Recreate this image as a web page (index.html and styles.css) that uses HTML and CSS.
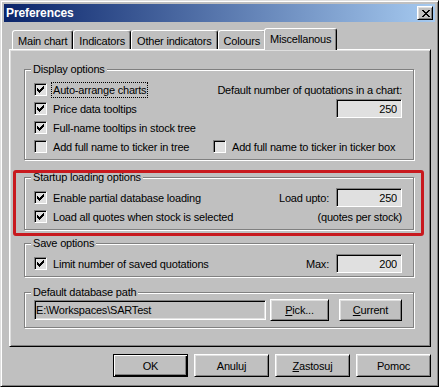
FILE: index.html
```html
<!DOCTYPE html>
<html lang="en">
<head>
  <meta charset="UTF-8">
  <meta name="viewport" content="width=device-width, initial-scale=1.0">
  <title>Preferences</title>
  <link rel="stylesheet" href="styles.css">
</head>
<body>
  <div class="window">
    <div class="titlebar">
      <span class="title">Preferences</span>
      <button class="close-btn" aria-label="Close">
        <svg width="8" height="7" viewBox="0 0 8 7" shape-rendering="crispEdges"><path d="M0 0h2v1h-2zM6 0h2v1h-2zM1 1h2v1h-2zM5 1h2v1h-2zM2 2h4v1h-4zM3 3h2v1h-2zM2 4h4v1h-4zM1 5h2v1h-2zM5 5h2v1h-2zM0 6h2v1h-2zM6 6h2v1h-2z"/></svg>
      </button>
    </div>

    <div class="client">
      <div class="tabs">
        <div class="tab">Main chart</div>
        <div class="tab">Indicators</div>
        <div class="tab">Other indicators</div>
        <div class="tab">Colours</div>
        <div class="tab active">Miscellanous</div>
      </div>

      <div class="panel">
        <fieldset class="group display">
          <legend>Display options</legend>
          <div class="grid">
            <label class="check">
              <span class="box"><svg width="7" height="7" viewBox="0 0 7 7" shape-rendering="crispEdges"><path d="M0 2H1V3H2V4H3V3H4V2H5V1H6V0H7V3H6V4H5V5H4V6H3V7H2V6H1V5H0Z"/></svg></span>
              <span class="text focus">Auto-arrange charts</span>
            </label>
            <span class="hint">Default number of quotations in a chart:</span>

            <label class="check">
              <span class="box"><svg width="7" height="7" viewBox="0 0 7 7" shape-rendering="crispEdges"><path d="M0 2H1V3H2V4H3V3H4V2H5V1H6V0H7V3H6V4H5V5H4V6H3V7H2V6H1V5H0Z"/></svg></span>
              <span class="text">Price data tooltips</span>
            </label>
            <input class="field number" type="text" value="250">

            <label class="check">
              <span class="box"><svg width="7" height="7" viewBox="0 0 7 7" shape-rendering="crispEdges"><path d="M0 2H1V3H2V4H3V3H4V2H5V1H6V0H7V3H6V4H5V5H4V6H3V7H2V6H1V5H0Z"/></svg></span>
              <span class="text">Full-name tooltips in stock tree</span>
            </label>
            <span></span>

            <label class="check">
              <span class="box"></span>
              <span class="text">Add full name to ticker in tree</span>
            </label>
            <label class="check">
              <span class="box"></span>
              <span class="text">Add full name to ticker in ticker box</span>
            </label>
          </div>
        </fieldset>

        <fieldset class="group startup">
          <legend>Startup loading options</legend>
          <div class="row">
            <label class="check">
              <span class="box"><svg width="7" height="7" viewBox="0 0 7 7" shape-rendering="crispEdges"><path d="M0 2H1V3H2V4H3V3H4V2H5V1H6V0H7V3H6V4H5V5H4V6H3V7H2V6H1V5H0Z"/></svg></span>
              <span class="text">Enable partial database loading</span>
            </label>
            <div class="inline">
              <span>Load upto:</span>
              <input class="field number" type="text" value="250">
            </div>
          </div>
          <div class="row">
            <label class="check">
              <span class="box"><svg width="7" height="7" viewBox="0 0 7 7" shape-rendering="crispEdges"><path d="M0 2H1V3H2V4H3V3H4V2H5V1H6V0H7V3H6V4H5V5H4V6H3V7H2V6H1V5H0Z"/></svg></span>
              <span class="text">Load all quotes when stock is selected</span>
            </label>
            <span>(quotes per stock)</span>
          </div>
        </fieldset>

        <fieldset class="group save">
          <legend>Save options</legend>
          <div class="row">
            <label class="check">
              <span class="box"><svg width="7" height="7" viewBox="0 0 7 7" shape-rendering="crispEdges"><path d="M0 2H1V3H2V4H3V3H4V2H5V1H6V0H7V3H6V4H5V5H4V6H3V7H2V6H1V5H0Z"/></svg></span>
              <span class="text">Limit number of saved quotations</span>
            </label>
            <div class="inline">
              <span>Max:</span>
              <input class="field number" type="text" value="200">
            </div>
          </div>
        </fieldset>

        <fieldset class="group path">
          <legend>Default database path</legend>
          <div class="path-row">
            <input class="field path-field" type="text" value="E:\Workspaces\SARTest">
            <button class="btn pick"><u>P</u>ick...</button>
            <button class="btn current"><u>C</u>urrent</button>
          </div>
        </fieldset>

        <div class="highlight"></div>
      </div>

      <div class="actions">
        <button class="btn default">OK</button>
        <button class="btn">Anuluj</button>
        <button class="btn"><u>Z</u>astosuj</button>
        <button class="btn">Pomoc</button>
      </div>
    </div>
  </div>
</body>
</html>
```

FILE: styles.css
```css
body {
  margin: 0;
  background-color: #c0c0c0;
  color: #000;
  font-family: "Liberation Sans", Arial, sans-serif;
  font-size: 11px;
  letter-spacing: -0.2px;
}

.window {
  box-sizing: border-box;
  width: 439px;
  height: 387px;
  padding: 3px;
  border: 1px solid;
  border-color: #dfdfdf #000 #000 #dfdfdf;
  box-shadow: inset 1px 1px #fff, inset -1px -1px #808080;
  display: flex;
  flex-direction: column;
}

.titlebar {
  height: 18px;
  flex: none;
  padding: 0 2px;
  display: flex;
  align-items: center;
  justify-content: space-between;
  background: linear-gradient(to right, #0a246a, #a6caf0);
}
.title {
  color: #fff;
  font-weight: bold;
  font-size: 12px;
  letter-spacing: -0.1px;
}
.close-btn {
  box-sizing: border-box;
  width: 16px;
  height: 14px;
  padding: 0 0 0 1px;
  border: 1px solid;
  border-color: #fff #000 #000 #fff;
  box-shadow: inset 1px 1px #dfdfdf, inset -1px -1px #808080;
  background-color: #c0c0c0;
  display: flex;
  align-items: center;
  justify-content: center;
}
.close-btn svg {
  display: block;
}

.client {
  flex: 1;
  padding: 6px 4px 0 5px;
  display: flex;
  flex-direction: column;
}

/* tab strip */
.tabs {
  height: 21px;
  padding-left: 3px;
  display: flex;
  align-items: flex-end;
}
.tab {
  box-sizing: border-box;
  height: 19px;
  padding: 2px 5px 0;
  line-height: 17px;
  border: 1px solid;
  border-bottom: none;
  border-color: #fff #000 transparent #fff;
  border-radius: 3px 3px 0 0;
  box-shadow: inset -1px 0 #808080;
  background-color: #c0c0c0;
  white-space: nowrap;
}
.tab.active {
  height: 22px;
  margin: 0 -2px -1px;
  position: relative;
  z-index: 1;
}

.panel {
  box-sizing: border-box;
  height: 298px;
  padding: 13px 16px 0 14px;
  border: 1px solid;
  border-color: #fff #000 #000 #fff;
  box-shadow: inset 1px 1px #dfdfdf, inset -1px -1px #808080;
  position: relative;
}

/* group boxes */
.group {
  margin: 0;
  min-width: 0;
  padding: 4px 11px 3px 9px;
  border: 1px solid #808080;
  box-shadow: 1px 1px 0 #fff, inset 1px 1px 0 #fff;
}
.group legend {
  margin-left: -3px;
  padding: 0 2px;
  line-height: 13px;
  background-color: #c0c0c0;
}
.startup {
  margin-top: 11px;
}
.save {
  margin-top: 7px;
}
.path {
  margin-top: 9px;
  padding-top: 0;
  padding-bottom: 6px;
}

.grid {
  display: grid;
  grid-template-columns: 179px 1fr;
  grid-auto-rows: 19px;
  align-items: center;
}
.hint,
.grid .field {
  justify-self: end;
}

.row {
  height: 19px;
  display: flex;
  align-items: center;
  justify-content: space-between;
}
.inline {
  display: flex;
  align-items: center;
  gap: 7px;
}

/* check boxes */
.check {
  display: flex;
  align-items: center;
  gap: 4px;
  white-space: nowrap;
}
.box {
  box-sizing: border-box;
  width: 13px;
  height: 13px;
  flex: none;
  border: 1px solid;
  border-color: #808080 #fff #fff #808080;
  box-shadow: inset 1px 1px #000, inset -1px -1px #dfdfdf;
  background-color: #e0e0e0;
  display: flex;
  align-items: center;
  justify-content: center;
}
.box svg {
  display: block;
}
.check .text {
  padding: 0 1px;
  line-height: 14px;
  border: 1px solid transparent;
}
.check .focus {
  border: 1px dotted #000;
}

/* edit fields */
.field {
  box-sizing: border-box;
  height: 19px;
  margin: 0;
  border: 1px solid;
  border-color: #808080 #fff #fff #808080;
  box-shadow: inset 1px 1px #000, inset -1px -1px #dfdfdf;
  outline: none;
  font: inherit;
  letter-spacing: inherit;
  color: #000;
}
.number {
  width: 66px;
  padding: 0 4px;
  text-align: right;
  background-color: #e0e0e0;
}
.path-row {
  height: 22px;
  display: flex;
  align-items: center;
}
.path-field {
  width: 232px;
  height: 20px;
  padding: 0 1px;
  background-color: #c0c0c0;
}

/* push buttons */
.btn {
  box-sizing: border-box;
  width: 75px;
  height: 23px;
  padding: 0;
  border: 1px solid;
  border-color: #fff #000 #000 #fff;
  box-shadow: inset 1px 1px #dfdfdf, inset -1px -1px #808080;
  background-color: #c0c0c0;
  font: inherit;
  letter-spacing: inherit;
  color: #000;
}
.btn.default {
  border-color: #000;
  box-shadow: inset 1px 1px #fff, inset -1px -1px #000, inset -2px -2px #808080;
}
.pick {
  width: 59px;
  height: 22px;
  margin-left: 4px;
}
.current {
  width: 63px;
  height: 22px;
  margin-left: 10px;
}

.actions {
  margin-top: 7px;
  display: flex;
  justify-content: flex-end;
  gap: 6px;
}

/* red annotation frame */
.highlight {
  position: absolute;
  left: 3px;
  top: 120px;
  width: 411px;
  height: 66px;
  box-sizing: border-box;
  border: 3px solid #c8191e;
  border-radius: 3px;
  pointer-events: none;
}
```
